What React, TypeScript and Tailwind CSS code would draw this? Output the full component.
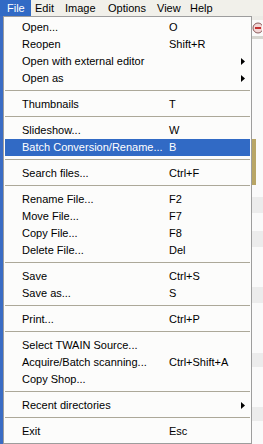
import React from 'react';

// === أنواع البيانات ===
type Entry =
  | { kind: 'item'; label: string; shortcut?: string; submenu?: boolean; active?: boolean }
  | { kind: 'sep' };

const entries: Entry[] = [
  { kind: 'item', label: 'Open...', shortcut: 'O' },
  { kind: 'item', label: 'Reopen', shortcut: 'Shift+R' },
  { kind: 'item', label: 'Open with external editor', submenu: true },
  { kind: 'item', label: 'Open as', submenu: true },
  { kind: 'sep' },
  { kind: 'item', label: 'Thumbnails', shortcut: 'T' },
  { kind: 'sep' },
  { kind: 'item', label: 'Slideshow...', shortcut: 'W' },
  { kind: 'item', label: 'Batch Conversion/Rename...', shortcut: 'B', active: true },
  { kind: 'sep' },
  { kind: 'item', label: 'Search files...', shortcut: 'Ctrl+F' },
  { kind: 'sep' },
  { kind: 'item', label: 'Rename File...', shortcut: 'F2' },
  { kind: 'item', label: 'Move File...', shortcut: 'F7' },
  { kind: 'item', label: 'Copy File...', shortcut: 'F8' },
  { kind: 'item', label: 'Delete File...', shortcut: 'Del' },
  { kind: 'sep' },
  { kind: 'item', label: 'Save', shortcut: 'Ctrl+S' },
  { kind: 'item', label: 'Save as...', shortcut: 'S' },
  { kind: 'sep' },
  { kind: 'item', label: 'Print...', shortcut: 'Ctrl+P' },
  { kind: 'sep' },
  { kind: 'item', label: 'Select TWAIN Source...' },
  { kind: 'item', label: 'Acquire/Batch scanning...', shortcut: 'Ctrl+Shift+A' },
  { kind: 'item', label: 'Copy Shop...' },
  { kind: 'sep' },
  { kind: 'item', label: 'Recent directories', submenu: true },
  { kind: 'sep' },
  { kind: 'item', label: 'Exit', shortcut: 'Esc' },
];

// عرض كل عنصر في شريط القوائم (مأخوذ من الصورة)
const menuBar = [
  { label: 'File', cls: 'w-[31px] pl-[7px] bg-[#316ac5] text-white' },
  { label: 'Edit', cls: 'w-[34px] pl-[4px]' },
  { label: 'Image', cls: 'w-[43px]' },
  { label: 'Options', cls: 'w-[49px]' },
  { label: 'View', cls: 'w-[33px]' },
  { label: 'Help', cls: 'w-[30px]' },
];

// === سهم القائمة الفرعية ===
const Arrow = ({ white }: { white?: boolean }) => (
  <svg width="4" height="7" viewBox="0 0 4 7" className="block">
    <path d="M0 0 L4 3.5 L0 7 Z" fill={white ? '#ffffff' : '#000000'} />
  </svg>
);

const App: React.FC = () => {
  return (
    <div
      className="w-[263px] h-[444px] overflow-hidden flex flex-col bg-[#f7f7f5] text-[11px] text-black"
      style={{ fontFamily: '"Liberation Sans", Arial, sans-serif' }}
    >
      {/* شريط القوائم */}
      <div className="h-[16px] flex items-center bg-[#f1f0ea] shrink-0">
        {menuBar.map((m) => (
          <div key={m.label} className={'h-full flex items-center shrink-0 whitespace-nowrap ' + m.cls}>
            {m.label}
          </div>
        ))}
      </div>

      <div className="flex flex-1 min-h-0">
        {/* حافة النافذة */}
        <div className="w-[3px] bg-[#3a6cc4] shrink-0" />

        {/* القائمة */}
        <div className="w-[249px] shrink-0 border border-[#9d9d9d] bg-[#fcfcfb] px-[1px] pt-[2px] flex flex-col">
          {entries.map((e, i) =>
            e.kind === 'sep' ? (
              <div key={i} className="h-[9px] pt-[3px] shrink-0">
                <div className="h-[1px] bg-[#aca899]" />
              </div>
            ) : (
              <div
                key={i}
                className={
                  'h-[17px] shrink-0 flex items-center pl-[17px] pr-[5px] ' +
                  (e.active ? 'bg-[#316ac5] text-white' : '')
                }
              >
                <span className="w-[147px] shrink-0 whitespace-nowrap">{e.label}</span>
                <span className="flex-1 whitespace-nowrap">{e.shortcut}</span>
                {e.submenu && <Arrow white={e.active} />}
              </div>
            )
          )}
        </div>

        {/* خلفية التطبيق */}
        <div className="flex-1 flex flex-col bg-[#fafafa]">
          <div className="h-[4px] bg-[#ecebe6]" />
          <div className="h-[16px] flex items-center">
            <svg width="10" height="12" viewBox="0 0 10 12">
              <circle cx="6" cy="6" r="5" fill="#f3d7d7" stroke="#8a5a5a" strokeWidth="1" />
              <rect x="3" y="5" width="6" height="2" fill="#c43030" />
            </svg>
          </div>
          <div className="h-[3px] bg-[#d6d5cf]" />
          <div className="h-[100px]" />
          <div className="h-[46px] w-[4px] bg-[#b8a565]" />
          <div className="h-[12px]" />
          <div className="h-[16px] bg-[#ececec]" />
          <div className="h-[18px]" />
          <div className="h-[16px] bg-[#ececec]" />
          <div className="h-[40px]" />
          <div className="h-[16px] bg-[#ececec]" />
          <div className="h-[50px]" />
          <div className="h-[14px] bg-[#ececec]" />
          <div className="h-[40px]" />
          <div className="h-[14px] bg-[#ececec]" />
        </div>
      </div>
    </div>
  );
};

export default App;
